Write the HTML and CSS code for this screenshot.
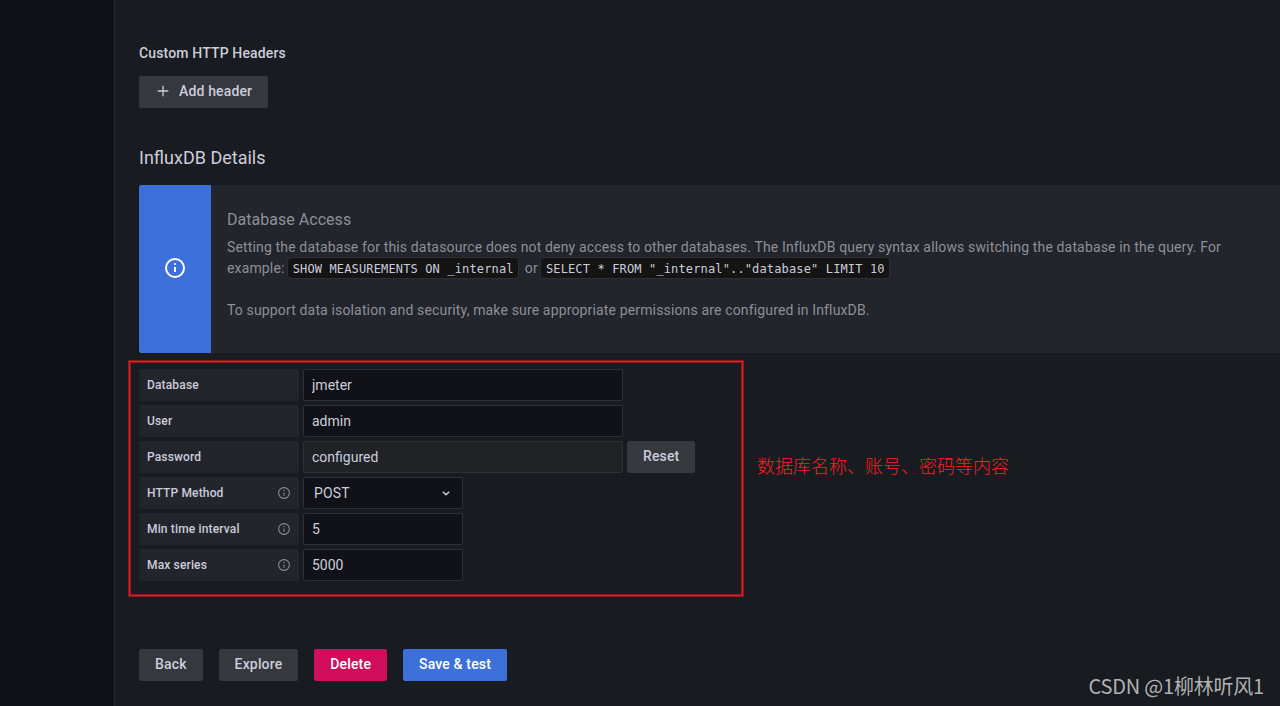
FILE: index.html
```
<!DOCTYPE html>
<html lang="en">
<head>
    <meta charset="UTF-8">
    <meta name="viewport" content="width=device-width, initial-scale=1.0">
    <title>InfluxDB data source</title>
    <link rel="stylesheet" href="styles.css">
</head>
<body>
    <div class="page">
        <div class="sidebar"></div>
        <main class="content">
            <h6 class="headers-title">Custom HTTP Headers</h6>
            <button class="btn btn-add" type="button">
                <svg class="plus" viewBox="0 0 16 16" width="16" height="16"><path d="M8 2.7v10.6M2.7 8h10.6"/></svg>
                Add header
            </button>

            <h3 class="section-title">InfluxDB Details</h3>

            <div class="alert">
                <div class="alert-icon">
                    <svg viewBox="0 0 24 24" width="24" height="24"><circle cx="12" cy="12" r="9"/><path d="M12 11v5"/><circle class="dot" cx="12" cy="8" r="1.1"/></svg>
                </div>
                <div class="alert-body">
                    <h5>Database Access</h5>
                    <p>Setting the database for this datasource does not deny access to other databases. The InfluxDB query syntax allows switching the database in the query. For example: <code>SHOW MEASUREMENTS ON _internal</code> or <code>SELECT * FROM "_internal".."database" LIMIT 10</code></p>
                    <p class="last">To support data isolation and security, make sure appropriate permissions are configured in InfluxDB.</p>
                </div>
            </div>

            <div class="details">
                <form class="form-box">
                    <div class="row">
                        <label class="label" for="database">Database</label>
                        <input class="input wide" id="database" type="text" value="jmeter">
                    </div>
                    <div class="row">
                        <label class="label" for="user">User</label>
                        <input class="input wide" id="user" type="text" value="admin">
                    </div>
                    <div class="row">
                        <label class="label" for="password">Password</label>
                        <input class="input wide" id="password" type="text" value="configured" disabled>
                        <button class="btn" type="button">Reset</button>
                    </div>
                    <div class="row">
                        <div class="label">HTTP Method
                            <svg class="info" viewBox="0 0 24 24" width="14" height="14"><circle cx="12" cy="12" r="9.2"/><path d="M12 11v5.5"/><circle class="dot" cx="12" cy="7.8" r="1.2"/></svg>
                        </div>
                        <div class="input select">POST
                            <svg class="chevron" viewBox="0 0 16 16" width="16" height="16"><path d="M4.8 6.8L8 9.8l3.2-3"/></svg>
                        </div>
                    </div>
                    <div class="row">
                        <label class="label" for="interval">Min time interval
                            <svg class="info" viewBox="0 0 24 24" width="14" height="14"><circle cx="12" cy="12" r="9.2"/><path d="M12 11v5.5"/><circle class="dot" cx="12" cy="7.8" r="1.2"/></svg>
                        </label>
                        <input class="input" id="interval" type="text" value="5">
                    </div>
                    <div class="row">
                        <label class="label" for="series">Max series
                            <svg class="info" viewBox="0 0 24 24" width="14" height="14"><circle cx="12" cy="12" r="9.2"/><path d="M12 11v5.5"/><circle class="dot" cx="12" cy="7.8" r="1.2"/></svg>
                        </label>
                        <input class="input" id="series" type="text" value="5000">
                    </div>
                </form>
                <div class="note" lang="zh">数据库名称、账号、密码等内容</div>
            </div>

            <div class="actions">
                <button class="btn" type="button">Back</button>
                <button class="btn" type="button">Explore</button>
                <button class="btn btn-delete" type="button">Delete</button>
                <button class="btn btn-save" type="submit">Save &amp; test</button>
            </div>
        </main>
    </div>
    <div class="watermark" lang="zh">CSDN @1柳林听风1</div>
</body>
</html>
```

FILE: styles.css
```
* {
    box-sizing: border-box;
}
body {
    margin: 0;
    font-family: Roboto, "Liberation Sans", sans-serif;
    font-size: 14px;
    line-height: 1.5;
    letter-spacing: 0.15px;
    color: #ccccdc;
    background: #111217;
    overflow: hidden;
}
h3, h5, h6, p {
    margin: 0;
}
svg {
    fill: none;
    stroke: currentColor;
    flex: none;
}
svg .dot {
    fill: currentColor;
    stroke: none;
}
.page {
    display: flex;
    height: 706px;
}
.sidebar {
    width: 114px;
    flex: none;
}
.content {
    flex: 1;
    min-width: 0;
    padding: 42px 0 0 24px;
    background: #181b1f;
    border-left: 1px solid #25272c;
}
.headers-title {
    font-size: 14px;
    font-weight: 500;
    line-height: 22px;
    margin-bottom: 12px;
}
.btn {
    display: inline-flex;
    align-items: center;
    height: 32px;
    padding: 0 16px 2px;
    border: 0;
    border-radius: 2px;
    background: #35383d;
    color: #ccccdc;
    font-family: inherit;
    font-size: 14px;
    font-weight: 500;
    letter-spacing: 0.15px;
    white-space: nowrap;
}
.plus {
    margin-right: 8px;
    stroke-width: 1.3;
}
.section-title {
    margin: 37px 0 15px;
    font-size: 18px;
    font-weight: 400;
    line-height: 25px;
    letter-spacing: 0;
}
.alert {
    display: flex;
    height: 168px;
    background: #22252b;
    border-radius: 2px 0 0 2px;
}
.alert-icon {
    display: flex;
    align-items: center;
    justify-content: center;
    width: 72px;
    flex: none;
    color: #fff;
    background: #3d71d9;
    border-radius: 2px 0 0 2px;
    padding-bottom: 2px;
}
.alert-icon svg {
    stroke-width: 2;
}
.alert-body {
    padding: 24px 56px 0 16px;
    color: #8e8f98;
}
.alert-body h5 {
    font-size: 16px;
    font-weight: 400;
    line-height: 22px;
    letter-spacing: 0.03px;
    margin-bottom: 6px;
}
.alert-body p {
    line-height: 21px;
}
.alert-body .last {
    margin-top: 21px;
}
code {
    display: inline-block;
    height: 22px;
    margin: -2px 2px 0 -1px;
    padding: 0 4.5px;
    font-family: "DejaVu Sans Mono", monospace;
    font-size: 12px;
    line-height: 22px;
    letter-spacing: 0.14px;
    color: #ccccdc;
    background: #141414;
    border: 1px solid #2c2e33;
    border-radius: 4px;
    vertical-align: middle;
}
.details {
    display: flex;
    align-items: center;
    margin: 7px 0 0 -11px;
}
/* red marker frame: bright line with darker edges */
.form-box {
    display: flex;
    flex-direction: column;
    gap: 4px;
    width: 616px;
    height: 237px;
    padding: 8px 10px;
    border: 1px solid #86191f;
    box-shadow: inset 0 0 0 1px #ed1c24, inset 0 0 0 2px #86191f;
}
.row {
    display: flex;
    gap: 4px;
}
.label {
    display: flex;
    align-items: center;
    justify-content: space-between;
    width: 160px;
    height: 32px;
    padding: 0 8px;
    font-size: 12px;
    font-weight: 500;
    background: #22252b;
    border-radius: 2px;
}
.info {
    color: #8e8f98;
    stroke-width: 1.8;
}
.input {
    width: 160px;
    height: 32px;
    padding: 0 8px;
    font-family: inherit;
    font-size: 14px;
    letter-spacing: 0;
    color: #ccccdc;
    background: #111217;
    border: 1px solid #2e3036;
    border-radius: 2px;
}
.wide {
    width: 320px;
}
.input:disabled {
    background: #202226;
}
.select {
    display: flex;
    align-items: center;
    justify-content: space-between;
    padding-left: 10px;
    letter-spacing: 0.15px;
}
.chevron {
    stroke-width: 1.5;
}
.note {
    margin-left: 13px;
    padding-bottom: 26px;
    font-family: "Noto Sans CJK SC", sans-serif;
    font-size: 18px;
    font-weight: 300;
    letter-spacing: 0;
    color: #ff1c24;
}
.actions {
    display: flex;
    gap: 16px;
    margin-top: 52px;
}
.btn-delete {
    color: #fff;
    background: #d10e5c;
}
.btn-save {
    color: #fff;
    background: #3d71d9;
}
.watermark {
    position: absolute;
    right: 16px;
    bottom: 5px;
    font-family: "Noto Sans CJK SC", sans-serif;
    font-size: 20px;
    font-weight: 400;
    letter-spacing: -0.2px;
    color: #b0b1b3;
}
```
